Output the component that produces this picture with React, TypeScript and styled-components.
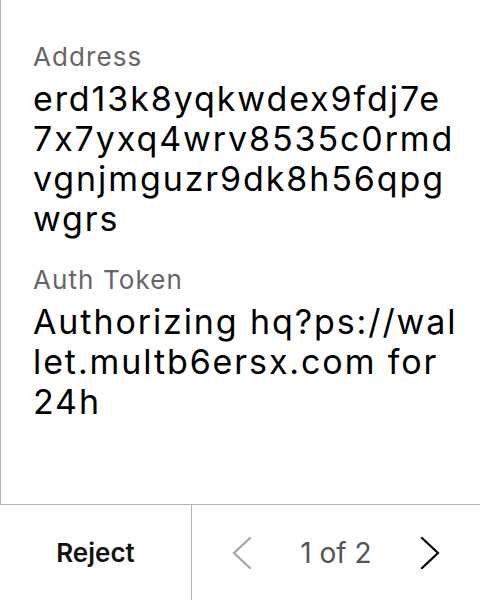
import React from "react";
import styled, { createGlobalStyle } from "styled-components";

const Global = createGlobalStyle`
  html, body { margin: 0; padding: 0; background: #fff; }
  body {
    font-family: Inter, "Noto Sans", sans-serif;
    font-feature-settings: "calt" 0;
    color: #111;
  }
`;

const Screen = styled.div`
  width: 480px;
  height: 600px;
  display: flex;
  flex-direction: column;
  background: #fff;
`;

const Content = styled.div`
  flex: 1;
  border-left: 1px solid #b3b3b3;
  padding: 41px 22px 0 32px;
  display: flex;
  flex-direction: column;
`;

const Field = styled.div`
  display: flex;
  flex-direction: column;
  gap: 6px;
  & + & { margin-top: 25px; }
`;

const Label = styled.div`
  font-size: 26px;
  line-height: 32px;
  letter-spacing: 1.1px;
  color: #666;
`;

const Value = styled.div`
  font-size: 34px;
  line-height: 40px;
  letter-spacing: 1.9px;
  color: #000;
  word-break: break-all;
`;

const Footer = styled.div`
  height: 96px;
  border-top: 1px solid #b3b3b3;
  display: grid;
  grid-template-columns: 192px 1fr;
  box-sizing: border-box;
`;

const RejectCell = styled.button`
  all: unset;
  display: flex;
  align-items: center;
  justify-content: center;
  font-family: Inter, sans-serif;
  font-size: 26px;
  font-weight: 600;
  color: #111;
  border-right: 1px solid #b3b3b3;
`;

const Pager = styled.div`
  display: flex;
  align-items: center;
  justify-content: center;
  gap: 48px;
`;

const Count = styled.span`
  font-size: 28px;
  color: #555;
`;

const Chevron = ({ dir, color }: { dir: "left" | "right"; color: string }) => (
  <svg width="20" height="32" viewBox="0 0 20 32" fill="none">
    <polyline
      points={dir === "left" ? "18,1 2,16 18,31" : "2,1 18,16 2,31"}
      stroke={color}
      strokeWidth="2.2"
      strokeLinecap="square"
    />
  </svg>
);

export default function App() {
  return (
    <Screen>
      <Global />
      <Content>
        <Field>
          <Label>Address</Label>
          <Value>erd13k8yqkwdex9fdj7e7x7yxq4wrv8535c0rmdvgnjmguzr9dk8h56qpgwgrs</Value>
        </Field>
        <Field>
          <Label>Auth Token</Label>
          <Value>Authorizing hq?ps://wallet.multb6ersx.com for 24h</Value>
        </Field>
      </Content>
      <Footer>
        <RejectCell>Reject</RejectCell>
        <Pager>
          <Chevron dir="left" color="#a6a6a6" />
          <Count>1 of 2</Count>
          <Chevron dir="right" color="#000" />
        </Pager>
      </Footer>
    </Screen>
  );
}
